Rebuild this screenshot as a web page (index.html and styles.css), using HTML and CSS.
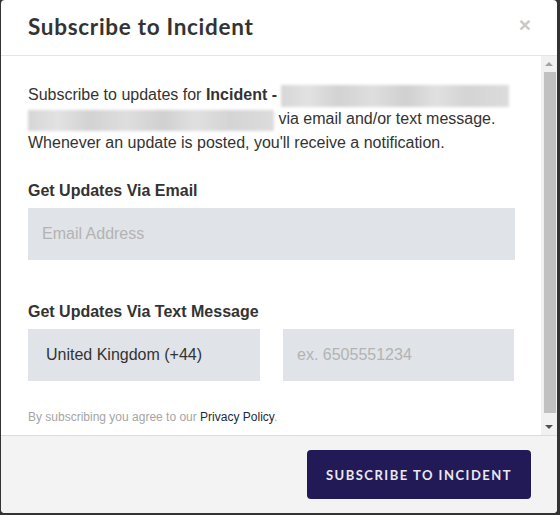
FILE: index.html
```html
<!DOCTYPE html>
<html>
<head>
<meta charset="utf-8">
<link rel="stylesheet" href="styles.css">
</head>
<body>
<div class="modal">
  <div class="modal-header">
    <h2 class="modal-title">Subscribe to Incident</h2>
    <span class="close">&times;</span>
  </div>
  <div class="modal-body">
    <div class="content">
      <p class="intro">Subscribe to updates for <b>Incident -</b> <span class="blur blur-a"></span><br><span class="blur blur-b"></span> via email and/or text message.<br>Whenever an update is posted, you'll receive a notification.</p>
      <h3 class="label label-email">Get Updates Via Email</h3>
      <div class="field field-full"><span class="placeholder">Email Address</span></div>
      <h3 class="label label-text">Get Updates Via Text Message</h3>
      <div class="row">
        <div class="field field-half"><span class="value">United Kingdom (+44)</span></div>
        <div class="field field-half"><span class="placeholder">ex. 6505551234</span></div>
      </div>
      <p class="legal">By subscribing you agree to our <a class="policy">Privacy Policy</a>.</p>
    </div>
    <div class="scrollbar">
      <div class="arrow arrow-up"></div>
      <div class="thumb"></div>
      <div class="arrow arrow-down"></div>
    </div>
  </div>
  <div class="modal-footer">
    <button class="btn">SUBSCRIBE TO INCIDENT</button>
  </div>
</div>
</body>
</html>
```

FILE: styles.css
```css
* { box-sizing: border-box; }
html, body { margin: 0; padding: 0; }
body {
  background: #333;
  width: 560px;
  height: 515px;
  overflow: hidden;
  font-family: "Liberation Sans", Arial, sans-serif;
}
.modal {
  margin: 0 3px 2px 1px;
  width: 556px;
  height: 513px;
  background: #fff;
  border-radius: 4px;
  display: flex;
  flex-direction: column;
  overflow: hidden;
}
.modal-header {
  height: 56px;
  border-bottom: 1px solid #e5e5e5;
  display: flex;
  align-items: center;
  justify-content: space-between;
  padding: 0 26px 2px 27px;
  flex: none;
}
.modal-title {
  margin: 0;
  font-family: "Lato", sans-serif;
  font-weight: 700;
  font-size: 22.5px;
  color: #333;
  letter-spacing: 0.7px;
}
.close {
  color: #c9c9c9;
  font-weight: 700;
  font-size: 21px;
  line-height: 1;
  margin-top: -4px;
}
.modal-body {
  flex: 1;
  display: flex;
  min-height: 0;
}
.content {
  flex: 1;
  padding: 27px 26px 0 27px;
  color: #333;
}
.intro {
  margin: 0;
  font-size: 16px;
  line-height: 24px;
}
.intro b { font-weight: 700; }
.blur {
  display: inline-block;
  vertical-align: top;
  height: 22px;
  filter: blur(1.5px);
  background: linear-gradient(90deg, #d6d6d6 0%, #e2e2e2 12%, #d2d2d2 25%, #dedede 40%, #d0d0d0 55%, #e0e0e0 68%, #d4d4d4 82%, #dcdcdc 100%);
}
.blur-a { width: 228px; margin-top: 2px; }
.blur-b { width: 246px; margin-top: 3px; height: 21px; }
.label {
  margin: 0;
  font-size: 16px;
  font-weight: 700;
  line-height: 24px;
  color: #333;
}
.label-email { margin-top: 24px; }
.label-text { margin-top: 40px; }
.field {
  height: 52px;
  background: #e0e3e7;
  display: flex;
  align-items: center;
  font-size: 16px;
}
.field-full { margin-top: 5px; padding-left: 14px; }
.placeholder { color: #b3b3b3; }
.value { color: #333; }
.row {
  margin-top: 5px;
  display: grid;
  grid-template-columns: 232px 231px;
  column-gap: 23px;
}
.row .field:first-child { padding-left: 18px; }
.row .field:last-child { padding-left: 14px; }
.legal {
  margin: 28px 0 0;
  font-size: 12px;
  line-height: 17px;
  color: #a5a5a5;
}
.policy { color: #1b2a3c; text-decoration: none; }
.scrollbar {
  width: 16px;
  flex: none;
  background: #f1f1f1;
  display: flex;
  flex-direction: column;
  align-items: center;
}
.arrow {
  height: 15px;
  width: 100%;
  position: relative;
  flex: none;
}
.arrow::after {
  content: "";
  position: absolute;
  left: 4px;
  border-left: 4px solid transparent;
  border-right: 4px solid transparent;
}
.arrow-up::after { top: 6px; border-bottom: 4px solid #a3a3a3; }
.arrow-down::after { top: 5px; border-top: 4px solid #505050; }
.thumb {
  flex: 1;
  width: 12px;
  margin: 1px 0 7px 2px;
  background: #c1c1c1;
}
.modal-footer {
  flex: none;
  height: 78px;
  border-top: 1px solid #dcdcdc;
  background: #f3f3f3;
  display: flex;
  justify-content: flex-end;
  align-items: flex-start;
  padding: 14px 26px 0 0;
}
.btn {
  width: 224px;
  height: 49px;
  border: 0;
  border-radius: 4px;
  background: #221a56;
  color: #e9e8f0;
  font-family: "Lato", sans-serif;
  font-weight: 700;
  font-size: 13px;
  letter-spacing: 1.5px;
  padding: 0;
}
```
